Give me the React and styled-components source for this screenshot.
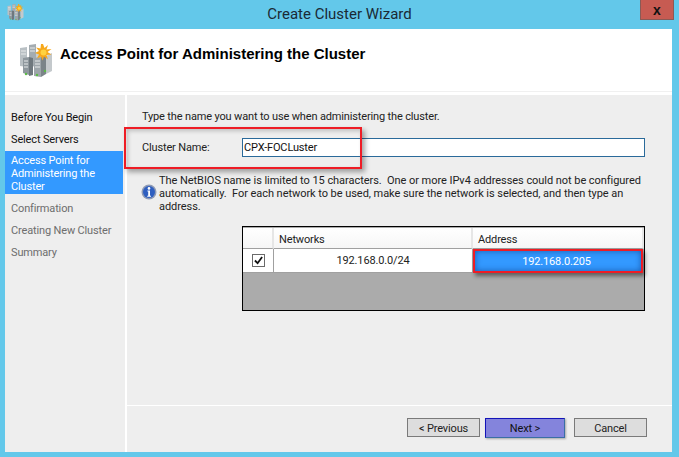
import React from 'react';
import styled, { createGlobalStyle } from 'styled-components';

const Global = createGlobalStyle`
  html, body { margin: 0; padding: 0; }
  body { font-family: Roboto, "Liberation Sans", sans-serif; }
`;

const Frame = styled.div`
  width: 679px;
  height: 457px;
  background: #63c8ea;
  display: flex;
  flex-direction: column;
  overflow: hidden;
`;

const TitleBar = styled.div`
  height: 29px;
  flex: none;
  display: grid;
  grid-template-columns: 1fr auto 1fr;
  padding: 0 5px;
`;

const TitleIcon = styled.div`
  padding: 4px 0 0 2px;
`;

const Title = styled.div`
  font-size: 15px;
  line-height: 28px;
  color: #1a2a35;
`;

const Close = styled.div`
  justify-self: end;
  width: 32px;
  height: 19px;
  background: #c75b52;
  border: 1px solid #8a5a55;
  border-top: none;
  display: flex;
  align-items: center;
  justify-content: center;
  font: bold 14px "Liberation Sans", sans-serif;
  color: #111;
`;

const Client = styled.div`
  flex: 1;
  margin: 0 7px 5px 5px;
  background: #fff;
  display: flex;
  flex-direction: column;
  min-height: 0;
`;

const Header = styled.div`
  height: 63px;
  flex: none;
  border-bottom: 1px solid #f0f0f0;
  display: flex;
  align-items: flex-start;
  padding: 15px 0 0 14px;
  gap: 7px;
  box-sizing: border-box;
`;

const HeaderTitle = styled.h1`
  margin: 1px 0 0;
  font: bold 15px/18px "Liberation Sans", sans-serif;
  color: #000;
`;

const Body = styled.div`
  flex: 1;
  margin-top: 3px;
  display: flex;
  min-height: 0;
  font-size: 11px;
  letter-spacing: -0.15px;
`;

const Sidebar = styled.nav`
  width: 118px;
  flex: none;
  background: #eeeeee;
  padding-top: 12px;
  margin-right: 4px;
  box-shadow: 2px 0 0 #eeeeee;
`;

const Step = styled.div`
  line-height: 22px;
  padding: 0 6px;
  white-space: nowrap;
  color: ${p => (p.$muted ? '#6d6d6d' : '#111')};
`;

const ActiveStep = styled(Step)`
  background: #3399ff;
  color: #fff;
  line-height: 13px;
  padding: 3px 6px 1px;
  margin-bottom: 4px;
  white-space: normal;
`;

const Main = styled.div`
  flex: 1;
  background: #eeeeee;
  display: flex;
  flex-direction: column;
  position: relative;
  color: #222;
`;

const Content = styled.div`
  flex: 1;
  padding: 14px 27px 0 15px;
`;

const Intro = styled.div`
  line-height: 15px;
`;

const NameRow = styled.div`
  display: flex;
  align-items: center;
  margin-top: 14px;
  height: 19px;
`;

const NameLabel = styled.label`
  width: 100px;
  flex: none;
`;

const NameInput = styled.div`
  flex: 1;
  height: 19px;
  box-sizing: border-box;
  background: #fff;
  border: 1px solid #2a6a9a;
  padding-left: 1px;
  line-height: 17px;
  color: #111;
`;

const Note = styled.div`
  display: flex;
  margin-top: 17px;
`;

const NoteIcon = styled.div`
  width: 18px;
  flex: none;
  padding: 10px 0 0 0;
  margin-left: -1px;
`;

const NoteText = styled.p`
  margin: 0;
  line-height: 13px;
  width: 484px;
  letter-spacing: -0.05px;
`;

const Grid = styled.div`
  margin: 13px 0 0 100px;
  height: 85px;
  box-sizing: border-box;
  border: 1px solid #000;
  background: #ababab;
  padding-top: 1px;
  display: grid;
  grid-template-columns: 31px 199px 1fr;
  grid-template-rows: 21px 24px;
`;

const HeadCell = styled.div`
  background: linear-gradient(#ffffff, #f6f6f6);
  border-right: 2px solid #e6e6e6;
  border-bottom: 1px solid #a0a0a0;
  padding-left: 5px;
  line-height: 24px;
  color: #222;
  &:last-child { border-right: none; padding-left: 2px; }
`;

const Cell = styled.div`
  background: #fff;
  border-right: 1px solid #a0a0a0;
  border-bottom: 1px solid #a0a0a0;
  text-align: center;
  line-height: 25px;
  display: flex;
  align-items: center;
  justify-content: center;
  color: #222;
`;

const CheckBox = styled.div`
  width: 11px;
  height: 11px;
  border: 1px solid #6a6a6a;
  background: #fff;
  display: flex;
  align-items: center;
  justify-content: center;
`;

const SelectedCell = styled(Cell)`
  background: #3399ff;
  color: #fff;
  border: 2px solid #ee1c25;
  margin: 0 1px 0 0;
  padding-right: 3px;
  box-shadow: 2px 3px 4px rgba(0, 0, 0, 0.45), inset 0 0 6px rgba(0, 40, 110, 0.55);
  z-index: 1;
`;

const Footer = styled.div`
  height: 47px;
  flex: none;
  border-top: 1px solid #fff;
  display: flex;
  padding: 12px 25px 0 0;
  justify-content: flex-end;
  box-sizing: border-box;
`;

const Button = styled.div`
  width: ${p => p.$w}px;
  height: 19px;
  box-sizing: border-box;
  border: 1px solid #7a7a7a;
  background: #dddddd;
  margin-left: ${p => p.$gap}px;
  text-align: center;
  line-height: 19px;
  color: #222;
`;

const NextButton = styled(Button)`
  background: #8484dc;
  height: 20px;
  border-color: #1414b8 #3a6ea5 #3a6ea5 #1414b8;
  box-shadow: 1px 1px 2px rgba(0, 0, 0, 0.3);
  color: #111;
`;

const Callout = styled.div`
  position: absolute;
  left: -3px;
  top: 32px;
  width: 238px;
  height: 42px;
  box-sizing: border-box;
  border: 2px solid #ee1c25;
  box-shadow: 3px 3px 5px rgba(0, 0, 0, 0.35), inset 2px 2px 4px rgba(0, 0, 0, 0.2);
  pointer-events: none;
`;

function ServerIcon({ size }) {
  return (
    <svg width={size} height={size} viewBox="0 0 34 34">
      <path d="M1 4l7-1v20l-7-1z" fill="#b9c0c4" />
      <path d="M10 1l7-1v22l-7 1z" fill="#a4acb1" />
      <path d="M17 8l10-1v16l-10 2z" fill="#c9ced1" />
      <path d="M4 14l6-1v18l-6-2z" fill="#8f989e" />
      <path d="M10 13l4 1v17l-4 1z" fill="#6f787e" />
      <path d="M15 14l7-1v20l-7-1z" fill="#9ea6ab" />
      <path d="M22 13l5-1v18l-5 3z" fill="#7b8489" />
      <path d="M27 12l6-3v18l-6 3z" fill="#c4c9cc" />
      <path d="M5 17h4M5 20h4M5 23h4M16 17h5M16 20h5M16 23h5M2 7h5M2 10h5M11 4h5M11 7h5" stroke="#e6e9ea" strokeWidth="1" />
      <circle cx="7" cy="30" r="1.2" fill="#5bbb45" />
      <circle cx="18" cy="31" r="1.2" fill="#5bbb45" />
      <circle cx="26" cy="27" r="1.2" fill="#5bbb45" />
      <path d="M24 0l1.5 4 3.5-3-1.5 4.5 5-.5-4 3 4 2.5-5 .5 1.5 4.5-4-3-1.5 4-1.5-4-4 2 2-4-4-1.5 4-2-3-3.5 4.5 1 .5-4.5z" fill="#f7a81b" />
      <circle cx="24.5" cy="8.5" r="3" fill="#ffd23f" />
    </svg>
  );
}

function InfoIcon() {
  return (
    <svg width="16" height="16" viewBox="0 0 16 16">
      <circle cx="8" cy="8" r="7.5" fill="#8f9bb5" />
      <circle cx="8" cy="8" r="6" fill="#2f5fc0" />
      <circle cx="8" cy="4.4" r="1.3" fill="#fff" />
      <path d="M6.4 6.6h2.6v5.2h1v1H6.2v-1h1v-4.2h-.8z" fill="#fff" />
    </svg>
  );
}

function CheckMark() {
  return (
    <svg width="9" height="9" viewBox="0 0 10 10">
      <path d="M1 5l3 3 5-7" fill="none" stroke="#111" strokeWidth="2" />
    </svg>
  );
}

export default function App() {
  return (
    <Frame>
      <Global />
      <TitleBar>
        <TitleIcon><ServerIcon size={17} /></TitleIcon>
        <Title>Create Cluster Wizard</Title>
        <Close>x</Close>
      </TitleBar>
      <Client>
        <Header>
          <ServerIcon size={34} />
          <HeaderTitle>Access Point for Administering the Cluster</HeaderTitle>
        </Header>
        <Body>
          <Sidebar>
            <Step>Before You Begin</Step>
            <Step>Select Servers</Step>
            <ActiveStep>Access Point for Administering the Cluster</ActiveStep>
            <Step $muted>Confirmation</Step>
            <Step $muted>Creating New Cluster</Step>
            <Step $muted>Summary</Step>
          </Sidebar>
          <Main>
            <Content>
              <Intro>Type the name you want to use when administering the cluster.</Intro>
              <NameRow>
                <NameLabel>Cluster Name:</NameLabel>
                <NameInput>CPX-FOCLuster</NameInput>
              </NameRow>
              <Note>
                <NoteIcon><InfoIcon /></NoteIcon>
                <NoteText>
                  The NetBIOS name is limited to 15 characters.&nbsp; One or more IPv4 addresses could not be configured automatically.&nbsp; For each network to be used, make sure the network is selected, and then type an address.
                </NoteText>
              </Note>
              <Grid>
                <HeadCell />
                <HeadCell>Networks</HeadCell>
                <HeadCell>Address</HeadCell>
                <Cell><CheckBox><CheckMark /></CheckBox></Cell>
                <Cell>192.168.0.0/24</Cell>
                <SelectedCell>192.168.0.205</SelectedCell>
              </Grid>
            </Content>
            <Footer>
              <Button $w={73} $gap={0}>&lt; Previous</Button>
              <NextButton $w={80} $gap={5}>Next &gt;</NextButton>
              <Button $w={73} $gap={9}>Cancel</Button>
            </Footer>
            <Callout />
          </Main>
        </Body>
      </Client>
    </Frame>
  );
}
